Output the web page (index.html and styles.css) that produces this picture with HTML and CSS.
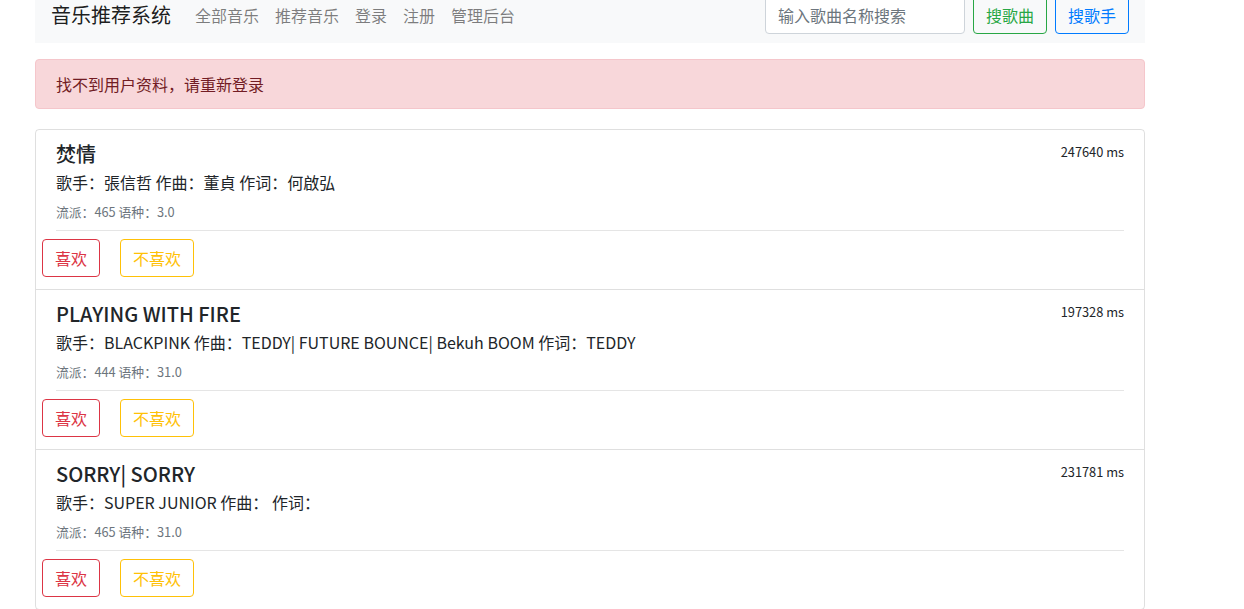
FILE: index.html
```html
<!DOCTYPE html>
<html lang="zh-CN">
<head>
    <meta charset="UTF-8">
    <meta name="viewport" content="width=device-width, initial-scale=1.0">
    <title>音乐推荐系统</title>
    <link rel="stylesheet" href="styles.css">
</head>
<body>
    <div class="container">
        <nav class="navbar">
            <a class="brand" href="#">音乐推荐系统</a>
            <ul class="nav-links">
                <li><a href="#">全部音乐</a></li>
                <li><a href="#">推荐音乐</a></li>
                <li><a href="#">登录</a></li>
                <li><a href="#">注册</a></li>
                <li><a href="#">管理后台</a></li>
            </ul>
            <form class="search-form">
                <input type="text" class="search-input" placeholder="输入歌曲名称搜索">
                <button type="button" class="btn btn-green">搜歌曲</button>
                <button type="button" class="btn btn-blue">搜歌手</button>
            </form>
        </nav>

        <div class="alert">找不到用户资料，请重新登录</div>

        <div class="song-list">
            <div class="song">
                <div class="song-head">
                    <h5 class="song-title">焚情</h5>
                    <small class="song-time">247640 ms</small>
                </div>
                <p class="song-people">歌手：張信哲 作曲：董貞 作词：何啟弘</p>
                <div class="song-meta"><small>流派：465 语种：3.0</small></div>
                <hr>
                <div class="song-actions">
                    <button class="btn btn-red">喜欢</button>
                    <button class="btn btn-yellow">不喜欢</button>
                </div>
            </div>
            <div class="song">
                <div class="song-head">
                    <h5 class="song-title">PLAYING WITH FIRE</h5>
                    <small class="song-time">197328 ms</small>
                </div>
                <p class="song-people">歌手：BLACKPINK 作曲：TEDDY| FUTURE BOUNCE| Bekuh BOOM 作词：TEDDY</p>
                <div class="song-meta"><small>流派：444 语种：31.0</small></div>
                <hr>
                <div class="song-actions">
                    <button class="btn btn-red">喜欢</button>
                    <button class="btn btn-yellow">不喜欢</button>
                </div>
            </div>
            <div class="song">
                <div class="song-head">
                    <h5 class="song-title">SORRY| SORRY</h5>
                    <small class="song-time">231781 ms</small>
                </div>
                <p class="song-people">歌手：SUPER JUNIOR 作曲： 作词：</p>
                <div class="song-meta"><small>流派：465 语种：31.0</small></div>
                <hr>
                <div class="song-actions">
                    <button class="btn btn-red">喜欢</button>
                    <button class="btn btn-yellow">不喜欢</button>
                </div>
            </div>
        </div>
    </div>
</body>
</html>
```

FILE: styles.css
```css
body {
    font-family: "Noto Sans CJK SC", "Noto Sans", sans-serif;
    font-size: 16px;
    line-height: 24px;
    color: #212529;
    background-color: #fff;
    margin: 0;
    padding: 0;
}
.container {
    width: 1110px;
    margin-left: 35px;
}
.navbar {
    display: flex;
    align-items: center;
    background: #f8f9fa;
    padding: 8px 16px;
    margin-top: -13px;
}
.brand {
    font-size: 20px;
    line-height: 30px;
    color: rgba(0,0,0,0.9);
    text-decoration: none;
    margin-right: 16px;
}
.nav-links {
    display: flex;
    list-style: none;
    margin: 0;
    padding: 0;
}
.nav-links a {
    display: block;
    padding: 8px;
    color: rgba(0,0,0,0.5);
    text-decoration: none;
}
.search-form {
    display: flex;
    margin-left: auto;
    gap: 8px;
}
.search-input {
    width: 200px;
    height: 38px;
    box-sizing: border-box;
    padding: 6px 12px;
    font: inherit;
    color: #495057;
    border: 1px solid #ced4da;
    border-radius: 4px;
    background: #fff;
}
.search-input::placeholder {
    color: #6c757d;
}
.btn {
    display: inline-block;
    font: inherit;
    line-height: 24px;
    height: 38px;
    padding: 6px 12px;
    border: 1px solid transparent;
    border-radius: 4px;
    background: transparent;
    cursor: pointer;
}
.btn-green {
    color: #28a745;
    border-color: #28a745;
}
.btn-blue {
    color: #007bff;
    border-color: #007bff;
}
.btn-red {
    color: #dc3545;
    border-color: #dc3545;
}
.btn-yellow {
    color: #ffc107;
    border-color: #ffc107;
}
.alert {
    margin-top: 16px;
    padding: 12px 20px;
    color: #721c24;
    background: #f8d7da;
    border: 1px solid #f5c6cb;
    border-radius: 4px;
}
.song-list {
    margin-top: 20px;
    border: 1px solid rgba(0,0,0,0.125);
    border-radius: 4px;
}
.song {
    padding: 12px 20px;
    border-top: 1px solid rgba(0,0,0,0.125);
}
.song:first-child {
    border-top: none;
}
.song-head {
    display: flex;
    justify-content: space-between;
    align-items: flex-start;
}
.song-title {
    font-size: 20px;
    font-weight: 500;
    line-height: 24px;
    margin: 0 0 4px;
}
.song-time {
    font-size: 12.8px;
    line-height: 20px;
}
.song-people {
    margin: 0 0 4px;
}
.song-meta {
    height: 24px;
}
.song-meta small {
    font-size: 12.8px;
    color: #6c757d;
}
hr {
    border: 0;
    border-top: 1px solid rgba(0,0,0,0.1);
    margin: 8px 0;
}
.song-actions {
    display: flex;
    gap: 20px;
    margin-left: -14px;
}
```
